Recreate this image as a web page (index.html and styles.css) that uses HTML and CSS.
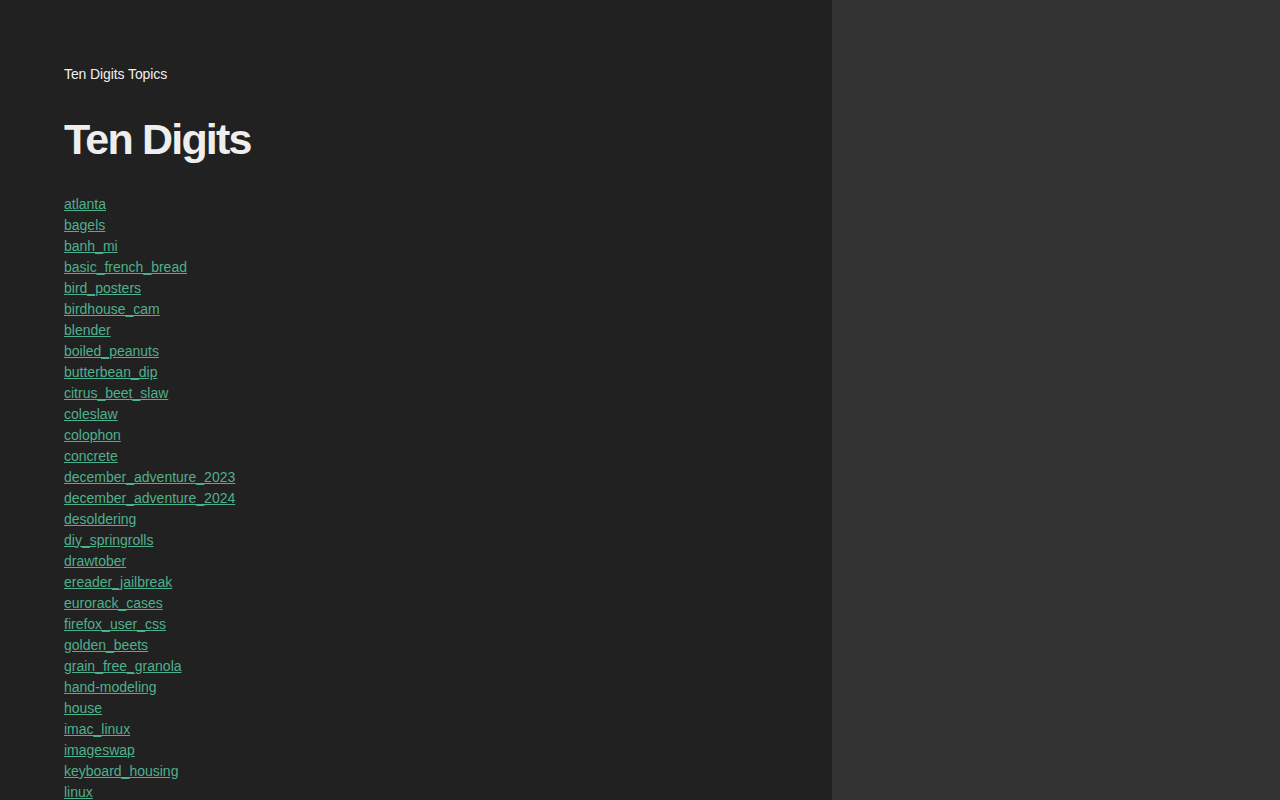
FILE: index.html
```html
<!DOCTYPE html>
<html lang="en">
<head>
<meta charset="utf-8">
<title>Ten Digits</title>
<link rel="stylesheet" href="styles.css">
</head>
<body>
<div class="page">
  <main class="main">
    <p class="site">Ten Digits Topics</p>
    <h1 class="title">Ten Digits</h1>
    <ul class="topics">
      <li><a href="#">atlanta</a></li>
      <li><a href="#">bagels</a></li>
      <li><a href="#">banh_mi</a></li>
      <li><a href="#">basic_french_bread</a></li>
      <li><a href="#">bird_posters</a></li>
      <li><a href="#">birdhouse_cam</a></li>
      <li><a href="#">blender</a></li>
      <li><a href="#">boiled_peanuts</a></li>
      <li><a href="#">butterbean_dip</a></li>
      <li><a href="#">citrus_beet_slaw</a></li>
      <li><a href="#">coleslaw</a></li>
      <li><a href="#">colophon</a></li>
      <li><a href="#">concrete</a></li>
      <li><a href="#">december_adventure_2023</a></li>
      <li><a href="#">december_adventure_2024</a></li>
      <li><a href="#">desoldering</a></li>
      <li><a href="#">diy_springrolls</a></li>
      <li><a href="#">drawtober</a></li>
      <li><a href="#">ereader_jailbreak</a></li>
      <li><a href="#">eurorack_cases</a></li>
      <li><a href="#">firefox_user_css</a></li>
      <li><a href="#">golden_beets</a></li>
      <li><a href="#">grain_free_granola</a></li>
      <li><a href="#">hand-modeling</a></li>
      <li><a href="#">house</a></li>
      <li><a href="#">imac_linux</a></li>
      <li><a href="#">imageswap</a></li>
      <li><a href="#">keyboard_housing</a></li>
      <li><a href="#">linux</a></li>
    </ul>
  </main>
  <aside class="side"></aside>
</div>
</body>
</html>
```
FILE: styles.css
```css
html, body {
  margin: 0;
  padding: 0;
  height: 100%;
}
body {
  background: #333333;
  font-family: "Liberation Sans", Arial, Helvetica, sans-serif;
  color: #eeeeee;
}
.page {
  display: flex;
  min-height: 100vh;
}
.main {
  width: 832px;
  box-sizing: border-box;
  background: #212121;
  padding: 64px 64px 64px 64px;
}
.side {
  flex: 1;
  background: #333333;
}
.site {
  margin: 0;
  font-size: 14px;
  line-height: 21px;
  letter-spacing: -0.1px;
  color: #f0f0f0;
}
.title {
  margin: 29px 0 28px 0;
  font-size: 43px;
  line-height: 1.2;
  font-weight: bold;
  letter-spacing: -1.8px;
  color: #eeeeee;
}
.topics {
  list-style: none;
  margin: 0;
  padding: 0;
  font-size: 14px;
  line-height: 21px;
}
.topics a {
  color: #4fb08c;
  text-decoration: underline;
}
```
